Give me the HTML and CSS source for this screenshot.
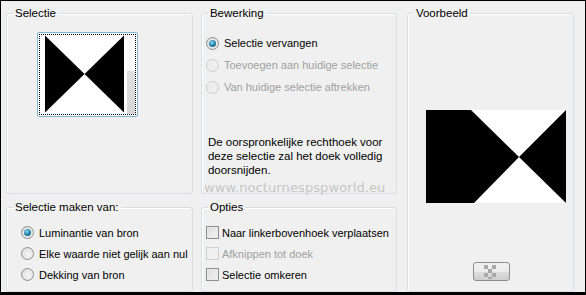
FILE: index.html
```html
<!DOCTYPE html>
<html lang="nl">
<head>
    <meta charset="UTF-8">
    <title>Selectie uit masker</title>
    <link rel="stylesheet" href="styles.css">
</head>
<body>
    <div class="dialog">
        <div class="col col-left">
            <fieldset class="group group-top">
                <legend>Selectie</legend>
                <div class="thumb">
                    <div class="thumb-inner">
                        <svg class="thumb-img" width="80" height="78" viewBox="0 0 80 78">
                            <rect width="80" height="78" fill="#fff"/>
                            <polygon points="0,0 40,39 0,78" fill="#000"/>
                            <polygon points="80,0 40,39 80,78" fill="#000"/>
                        </svg>
                        <div class="thumb-scroll"></div>
                    </div>
                </div>
            </fieldset>
            <fieldset class="group group-bottom">
                <legend>Selectie maken van:</legend>
                <label class="opt"><span class="radio checked"></span>Luminantie van bron</label>
                <label class="opt"><span class="radio"></span>Elke waarde niet gelijk aan nul</label>
                <label class="opt"><span class="radio"></span>Dekking van bron</label>
            </fieldset>
        </div>

        <div class="col col-mid">
            <fieldset class="group group-top">
                <legend>Bewerking</legend>
                <label class="opt opt-wide"><span class="radio checked"></span>Selectie vervangen</label>
                <label class="opt opt-wide disabled"><span class="radio"></span>Toevoegen aan huidige selectie</label>
                <label class="opt opt-wide disabled"><span class="radio"></span>Van huidige selectie aftrekken</label>
                <p class="note">De oorspronkelijke rechthoek voor deze selectie zal het doek volledig doorsnijden.</p>
            </fieldset>
            <fieldset class="group group-bottom">
                <legend>Opties</legend>
                <label class="opt"><span class="check"></span>Naar linkerbovenhoek verplaatsen</label>
                <label class="opt disabled"><span class="check"></span>Afknippen tot doek</label>
                <label class="opt"><span class="check"></span>Selectie omkeren</label>
            </fieldset>
            <div class="watermark">www.nocturnespspworld.eu</div>
        </div>

        <div class="col col-right">
            <fieldset class="group group-full">
                <legend>Voorbeeld</legend>
                <div class="preview">
                    <svg width="140" height="93" viewBox="0 0 140 93">
                        <rect width="140" height="93" fill="#000"/>
                        <polygon points="45,0 140,0 93,47" fill="#fff"/>
                        <polygon points="48,93 93,47 140,93" fill="#fff"/>
                    </svg>
                </div>
                <div class="btn-row">
                    <button class="btn-bg" type="button">
                        <svg width="14" height="14" viewBox="0 0 14 14">
                            <rect x="0" y="0" width="4" height="4" fill="#a8a8a8"/>
                            <rect x="8" y="0" width="4" height="4" fill="#a8a8a8"/>
                            <rect x="4" y="4" width="4" height="4" fill="#a8a8a8"/>
                            <rect x="0" y="8" width="4" height="4" fill="#a8a8a8"/>
                            <rect x="8" y="8" width="4" height="4" fill="#a8a8a8"/>
                            <rect x="4" y="12" width="4" height="2" fill="#a8a8a8"/>
                        </svg>
                    </button>
                </div>
            </fieldset>
        </div>
    </div>
</body>
</html>
```

FILE: styles.css
```css
html, body {
    margin: 0;
    padding: 0;
}

body {
    font-family: "Liberation Sans", Arial, sans-serif;
    font-size: 11px;
    color: #000;
    background: #000;
}

.dialog {
    width: 585px;
    height: 292px;
    border-top: 1px solid #000;
    border-left: 1px solid #000;
    background: #f0f0f0;
    display: flex;
    box-sizing: border-box;
    padding: 5px 11px 0 5px;
    gap: 8px;
}

.col {
    display: flex;
    flex-direction: column;
    gap: 6px;
}

.col-left { width: 188px; }
.col-mid { width: 196px; position: relative; }
.col-right { width: 168px; margin-left: 2px; }

.group {
    margin: 0;
    padding: 0 4px;
    border: 1px solid #d5dfe5;
    border-radius: 3px;
    box-shadow: inset 1px 1px 0 #fff;
    box-sizing: border-box;
    min-width: 0;
}

.group legend {
    padding: 0 2px;
    margin-left: 2px;
    font-size: 11.5px;
    line-height: 14px;
}

.group-top { height: 189px; }
.group-bottom { height: 92px; }
.group-full { height: 288px; display: flex; flex-direction: column; }

.thumb {
    width: 101px;
    height: 85px;
    margin: 12px 0 0 26px;
    border: 1px solid #7fb4d3;
    border-radius: 2px;
    background: #fff;
    box-sizing: border-box;
    padding: 1px;
}

.thumb-inner {
    height: 100%;
    border: 1px dotted #000;
    box-sizing: border-box;
    display: flex;
}

.thumb-img {
    display: block;
    margin-left: 5px;
}

.thumb-scroll {
    width: 8px;
    margin-left: 3px;
    background: linear-gradient(to bottom, #fafafa 0, #fafafa 45%, #e0e0e0 46%, #d6d6d6 100%);
}

.opt {
    display: flex;
    align-items: center;
    height: 21px;
    white-space: nowrap;
}

.group-bottom .opt:first-of-type { margin-top: 8px; }
.col-left .group-bottom .opt { padding-left: 10px; }

.opt-wide { height: 22px; }
.opt-wide:first-of-type { margin-top: 12px; }

.disabled { color: #a0a0a0; }

.radio {
    width: 11px;
    height: 11px;
    border: 1px solid #8f8f8f;
    border-radius: 50%;
    background: radial-gradient(circle at 60% 60%, #f4f4f4 0, #e2e2e2 70%, #cfcfcf 100%);
    margin-right: 5px;
    position: relative;
    flex: none;
}

.radio.checked::after {
    content: "";
    position: absolute;
    left: 2px;
    top: 2px;
    width: 7px;
    height: 7px;
    border-radius: 50%;
    background: radial-gradient(circle at 40% 35%, #8fd6ea 0, #1f7fa8 55%, #0c4d6e 100%);
}

.disabled .radio {
    border-color: #cfcfcf;
    background: #ededed;
}

.check {
    width: 11px;
    height: 11px;
    border: 1px solid #8f8f8f;
    background: linear-gradient(135deg, #dcdcdc 0, #f4f4f4 100%);
    box-shadow: inset 0 0 0 1px #e8e8e8;
    margin-right: 3px;
    flex: none;
}

.disabled .check {
    border-color: #cfcfcf;
    background: #f0f0f0;
    box-shadow: none;
}

.note {
    margin: 37px 0 0 2px;
    line-height: 14px;
    font-size: 11.5px;
    width: 185px;
}

.watermark {
    position: absolute;
    left: 3px;
    top: 174px;
    font-family: "DejaVu Sans", sans-serif;
    font-size: 13px;
    letter-spacing: 0.1px;
    color: #c6c6c6;
}

.preview {
    margin: 90px 0 0 14px;
}

.preview svg { display: block; }

.btn-row {
    margin-top: auto;
    margin-bottom: 10px;
    display: flex;
    justify-content: center;
    padding-left: 2px;
}

.btn-bg {
    width: 37px;
    height: 19px;
    padding: 0;
    border: 1px solid #8d8d8d;
    border-radius: 3px;
    background: linear-gradient(to bottom, #f2f2f2 0, #ebebeb 50%, #dddddd 51%, #cfcfcf 100%);
    display: flex;
    align-items: center;
    justify-content: center;
}
```
